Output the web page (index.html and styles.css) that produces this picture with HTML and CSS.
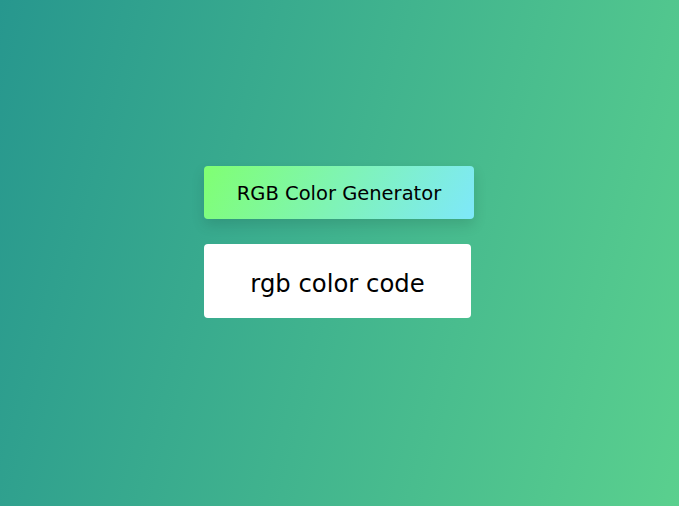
FILE: index.html
```html
<!DOCTYPE html>
<html lang="en">
<head>
<meta charset="utf-8">
<title>RGB Color Generator</title>
<link rel="stylesheet" href="styles.css">
</head>
<body>
<main class="app">
  <button class="generate">RGB Color Generator</button>
  <div class="code">rgb color code</div>
</main>
</body>
</html>
```
FILE: styles.css
```css
html, body {
  margin: 0;
  height: 100%;
}
body {
  background: linear-gradient(105deg, #27978e, #5ad08e);
  font-family: "DejaVu Sans", "Noto Sans", sans-serif;
  display: flex;
  justify-content: center;
  align-items: flex-start;
}
.app {
  margin-top: 166px;
  margin-right: 1px;
  width: 270px;
  display: flex;
  flex-direction: column;
  align-items: flex-start;
  gap: 25px;
}
.generate {
  width: 270px;
  height: 53px;
  padding-top: 2px;
  border: none;
  border-radius: 4px;
  background: linear-gradient(120deg, #80ff72, #7ee8fa);
  font-family: inherit;
  font-size: 19.5px;
  color: #000;
  box-shadow: 0 6px 14px rgba(0,0,0,0.12);
  cursor: pointer;
}
.code {
  box-sizing: border-box;
  width: 267px;
  height: 74px;
  padding-top: 4px;
  background: #fff;
  border-radius: 4px;
  display: flex;
  align-items: center;
  justify-content: center;
  font-size: 24.3px;
  color: #000;
}
```
